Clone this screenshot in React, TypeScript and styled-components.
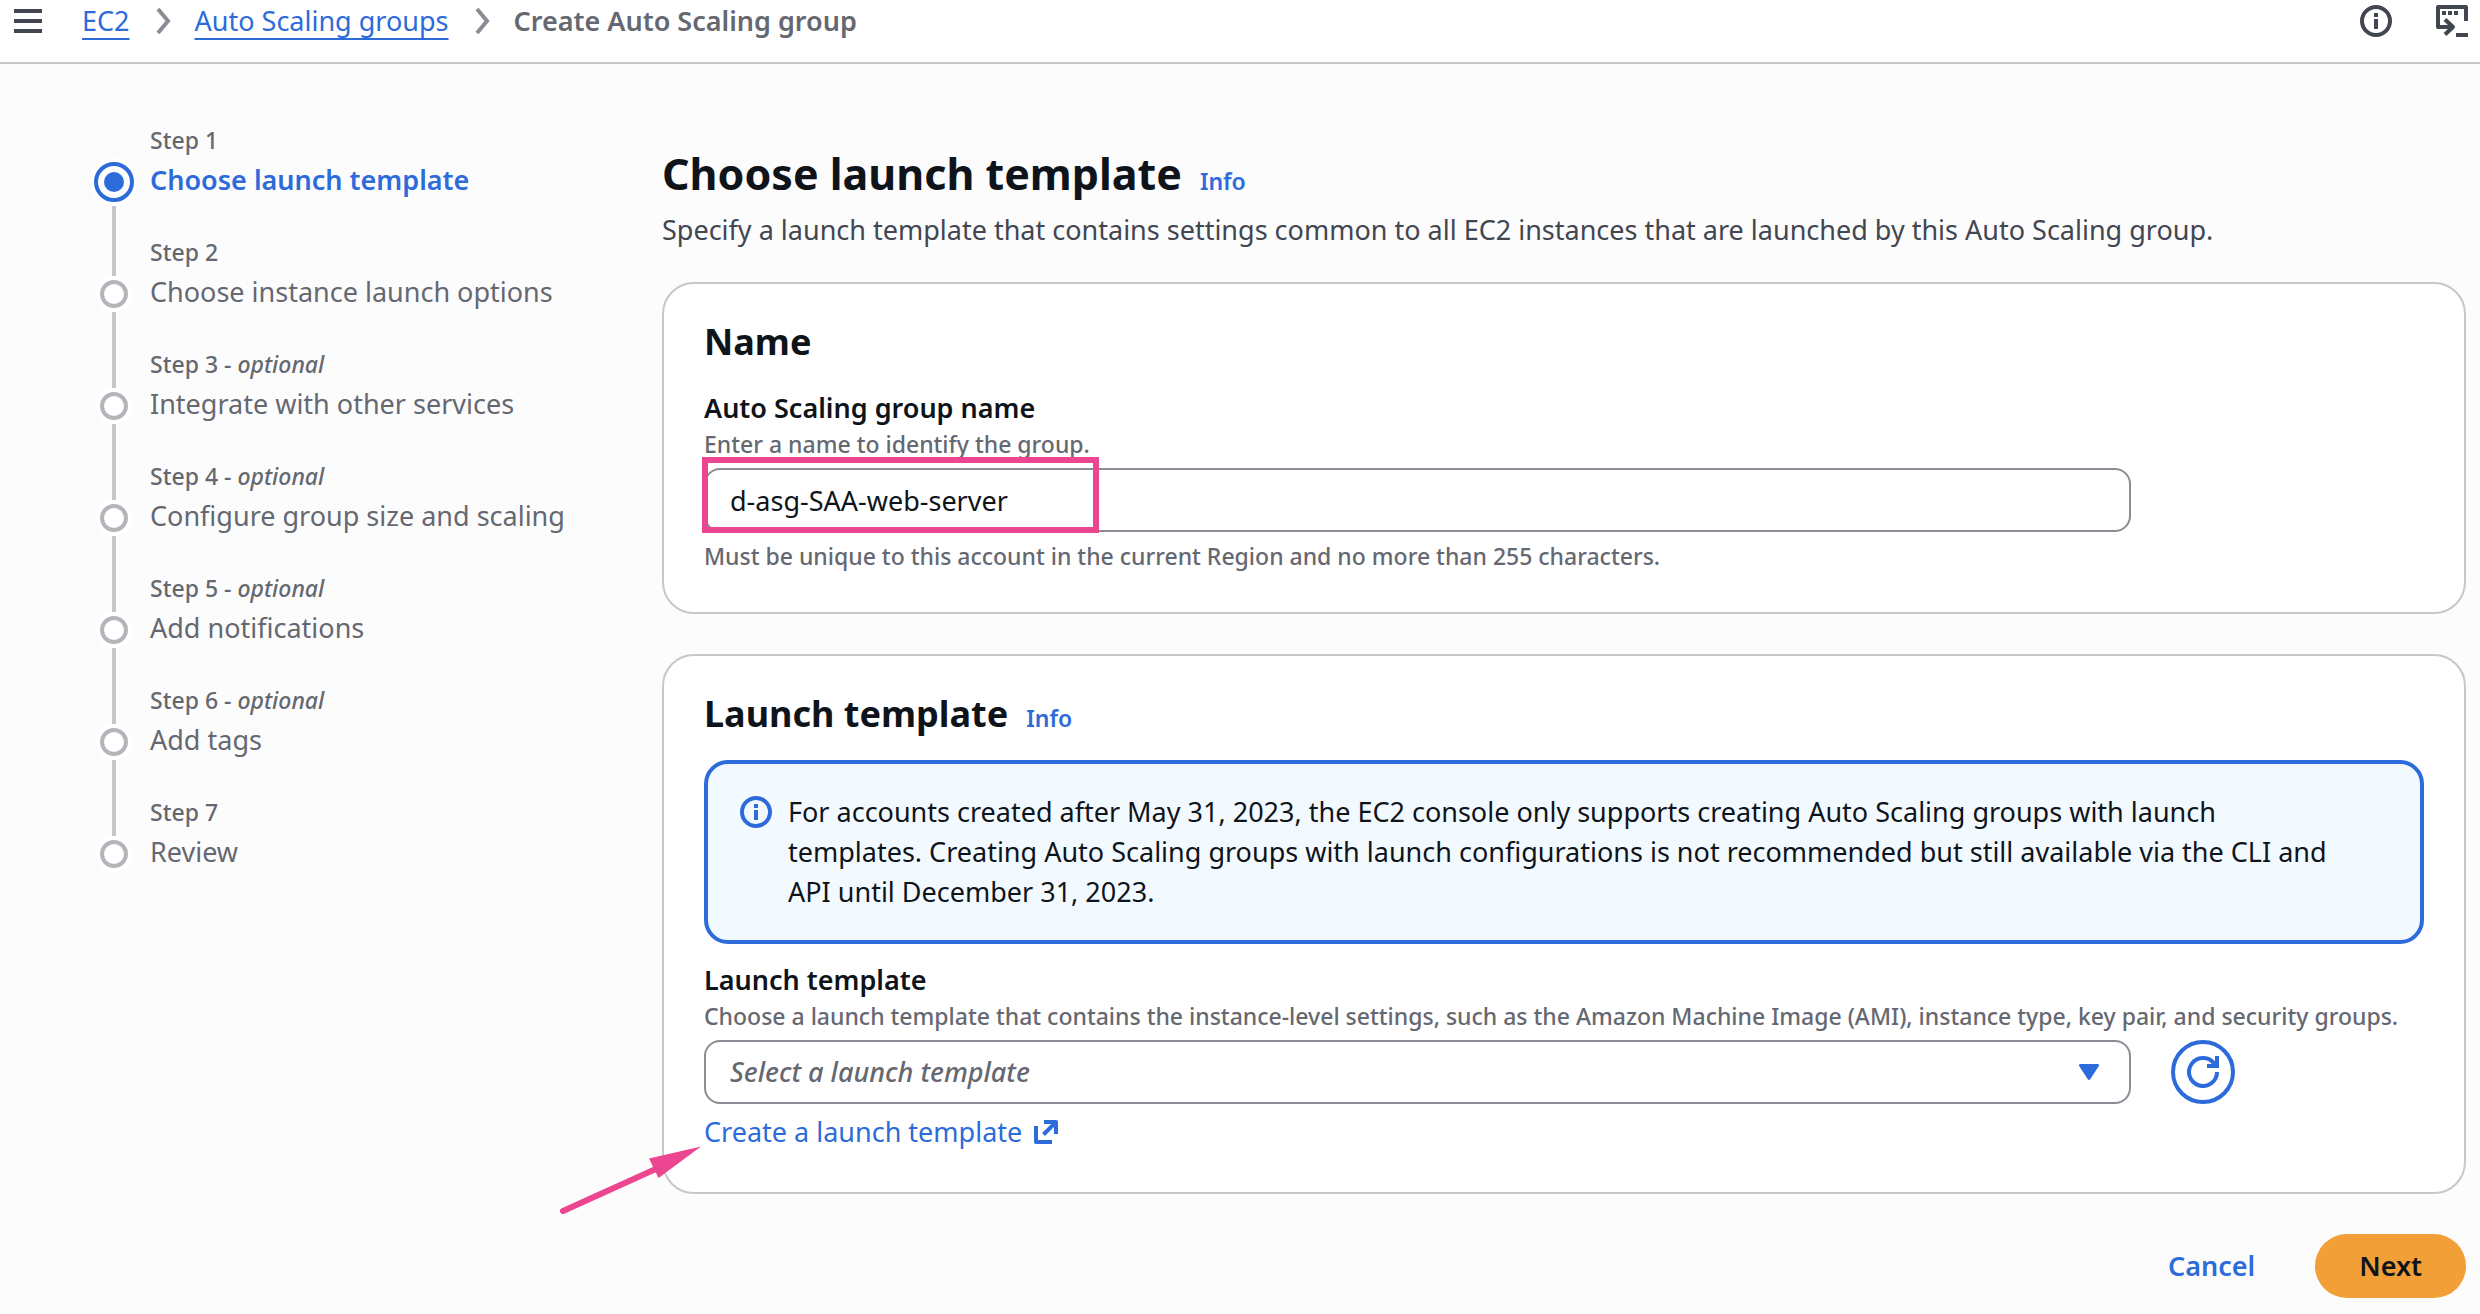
import React, { useState } from "react";
import styled, { createGlobalStyle, css } from "styled-components";

const color = {
  page: "#fcfcfd",
  surface: "#ffffff",
  line: "#c6c6cd",
  marker: "#b4b4bb",
  field: "#8c8c94",
  text: "#0f141a",
  body: "#424650",
  muted: "#656871",
  link: "#2d6bdb",
  notice: "#f3faff",
  primary: "#f29f38",
  accent: "#ec4690",
};

const GlobalStyle = createGlobalStyle`
  *, *::before, *::after { box-sizing: border-box; }
  body {
    margin: 0;
    background: ${color.page};
    color: ${color.text};
    font-family: "Noto Sans", "Open Sans", sans-serif;
    font-size: 27px;
    line-height: 40px;
  }
  h1, h2, p, ol { margin: 0; padding: 0; }
  button, input, select { font: inherit; color: inherit; }
  svg { display: block; flex: none; }
`;

const TopBar = styled.header`
  display: flex;
  justify-content: space-between;
  align-items: flex-start;
  padding: 0 12px 20px 14px;
  background: ${color.surface};
  border-bottom: 2px solid ${color.line};
`;

const IconButton = styled.button`
  display: flex;
  align-items: center;
  height: 42px;
  padding: 0;
  border: 0;
  background: none;
  color: ${color.body};
  cursor: pointer;
`;

const BarGroup = styled.div<{ $gap: number }>`
  display: flex;
  align-items: center;
  gap: ${(p) => p.$gap}px;
`;

const Crumbs = styled.ol`
  display: flex;
  list-style: none;
`;

const Crumb = styled.li`
  display: flex;
  align-items: center;
  font-weight: 600;
  color: ${color.muted};

  svg {
    margin: 0 24px 0 26px;
    color: ${color.field};
  }
`;

const CrumbLink = styled.a`
  color: ${color.link};
  font-weight: 400;
  text-decoration: underline 2px;
  text-underline-offset: 7px;
`;

const Layout = styled.div`
  display: grid;
  grid-template-columns: 528px minmax(0, 1fr);
  column-gap: 40px;
  padding: 60px 14px 16px 94px;
`;

const Steps = styled.ol`
  list-style: none;
`;

const Step = styled.li`
  display: flex;
  gap: 16px;
  min-height: 112px;
`;

const Rail = styled.div`
  display: flex;
  flex-direction: column;
  align-items: center;
  width: 40px;
`;

const RailLine = styled.span<{ $height?: number; $hidden?: boolean }>`
  width: 4px;
  ${(p) => (p.$height ? `height: ${p.$height}px;` : "flex: 1;")}
  background: ${(p) => (p.$hidden ? "transparent" : color.line)};
`;

const Dot = styled.span<{ $active: boolean }>`
  width: 28px;
  height: 28px;
  margin: 4px 0;
  border: 4px solid ${color.marker};
  border-radius: 50%;
  background: ${color.surface};
  box-shadow: 0 0 0 4px ${color.surface};
  ${(p) =>
    p.$active &&
    css`
      width: 40px;
      height: 40px;
      padding: 6px;
      border-color: ${color.link};
      background-color: ${color.link};
      background-clip: content-box;
    `}
`;

const StepText = styled.div`
  display: flex;
  flex-direction: column;
  gap: 4px;
  padding-bottom: 36px;
  color: ${color.muted};
`;

const StepNumber = styled.span`
  font-size: 23px;
  font-weight: 500;
  line-height: 32px;
`;

const StepName = styled.span<{ $active: boolean }>`
  ${(p) =>
    p.$active &&
    css`
      color: ${color.link};
      font-weight: 600;
    `}
`;

const Main = styled.main`
  display: flex;
  flex-direction: column;
  gap: 40px;
  padding-top: 20px;
`;

const Intro = styled.div`
  display: flex;
  flex-direction: column;
  gap: 6px;
  margin-bottom: -8px;
  color: ${color.body};
`;

const HeadingRow = styled.div`
  display: flex;
  align-items: baseline;
  gap: 18px;
`;

const PageTitle = styled.h1`
  color: ${color.text};
  font-size: 43px;
  font-weight: 700;
  line-height: 60px;
`;

const CardTitle = styled.h2`
  font-size: 36px;
  font-weight: 700;
  line-height: 48px;
`;

const InfoLink = styled.a`
  color: ${color.link};
  font-size: 23px;
  font-weight: 600;
  line-height: 32px;
  text-decoration: none;
`;

const Card = styled.section`
  display: flex;
  flex-direction: column;
  padding: 34px 40px 40px;
  border: 2px solid ${color.line};
  border-radius: 32px;
  background: ${color.surface};
`;

const Field = styled.div<{ $space: number }>`
  display: flex;
  flex-direction: column;
  margin-top: ${(p) => p.$space}px;
`;

const FieldLabel = styled.label`
  font-weight: 600;
`;

const Hint = styled.p`
  color: ${color.muted};
  font-size: 23px;
  font-weight: 500;
  line-height: 32px;
`;

const ControlRow = styled.div`
  display: grid;
  grid-template-columns: repeat(12, minmax(0, 1fr));
  column-gap: 40px;
  margin: 8px 0;
`;

const Control = styled.div`
  position: relative;
  grid-column: span 10;
`;

const controlBox = css`
  display: block;
  width: 100%;
  height: 64px;
  padding: 0 24px;
  border: 2px solid ${color.field};
  border-radius: 16px;
  background: ${color.surface};
`;

const TextInput = styled.input`
  ${controlBox}
`;

const Select = styled.select`
  ${controlBox}
  appearance: none;
  color: ${color.muted};
  font-style: italic;
  font-weight: 500;
`;

const Caret = styled.svg`
  position: absolute;
  top: 24px;
  right: 32px;
  color: ${color.link};
  pointer-events: none;
`;

const Highlight = styled.span`
  position: absolute;
  top: -11px;
  left: -2px;
  width: 397px;
  height: 76px;
  border: 6px solid ${color.accent};
  pointer-events: none;
`;

const RoundButton = styled.button`
  display: grid;
  place-items: center;
  width: 64px;
  height: 64px;
  padding: 0;
  border: 4px solid ${color.link};
  border-radius: 50%;
  background: ${color.surface};
  color: ${color.link};
  cursor: pointer;
`;

const Notice = styled.div`
  display: flex;
  align-items: flex-start;
  gap: 16px;
  margin-top: 22px;
  padding: 28px 72px 28px 32px;
  border: 4px solid ${color.link};
  border-radius: 24px;
  background: ${color.notice};

  svg {
    margin-top: 4px;
    color: ${color.link};
  }
`;

const CreateLink = styled.a`
  position: relative;
  display: flex;
  align-items: center;
  align-self: flex-start;
  gap: 12px;
  color: ${color.link};
  text-decoration: none;
`;

const Pointer = styled.svg`
  position: absolute;
  top: 30px;
  left: -150px;
  overflow: visible;
  pointer-events: none;
`;

const Actions = styled.div`
  display: flex;
  justify-content: flex-end;
  gap: 20px;
`;

const Button = styled.button<{ $primary?: boolean }>`
  height: 64px;
  padding: 0 ${(p) => (p.$primary ? 44 : 40)}px;
  border: 0;
  border-radius: 32px;
  background: ${(p) => (p.$primary ? color.primary : "transparent")};
  color: ${(p) => (p.$primary ? color.text : color.link)};
  font-weight: 600;
  cursor: pointer;
`;

const MenuIcon = () => (
  <svg width="28" height="24" viewBox="0 0 28 24" fill="currentColor" aria-hidden="true">
    <path d="M0 0h28v4H0zM0 10h28v4H0zM0 20h28v4H0z" />
  </svg>
);

const ChevronIcon = () => (
  <svg width="15" height="26" viewBox="0 0 15 26" fill="none" stroke="currentColor" strokeWidth="4" aria-hidden="true">
    <path d="M2 1l10 12L2 25" />
  </svg>
);

const InfoIcon = () => (
  <svg width="32" height="32" viewBox="0 0 32 32" fill="none" stroke="currentColor" strokeWidth="4" aria-hidden="true">
    <circle cx="16" cy="16" r="14" />
    <path d="M16 8v4M16 14v10" />
  </svg>
);

const ShellIcon = () => (
  <svg width="32" height="32" viewBox="0 0 32 32" fill="none" stroke="currentColor" strokeWidth="4" aria-hidden="true">
    <path d="M30 16V2H2v20h15" strokeLinejoin="round" />
    <path d="M9 14.500l8 7.500-8 7.500" strokeLinejoin="round" />
    <path d="M6 8h4M12 8h4M18 8h4M20 30h12" />
  </svg>
);

const RefreshIcon = () => (
  <svg width="32" height="32" viewBox="0 0 32 32" fill="none" stroke="currentColor" strokeWidth="4" aria-hidden="true">
    <path d="M30 16A14 14 0 1 1 27.500 8" />
    <path d="M30 0v10H20" />
  </svg>
);

const ExternalIcon = () => (
  <svg width="24" height="24" viewBox="0 0 24 24" fill="none" stroke="currentColor" strokeWidth="4" aria-hidden="true">
    <path d="M2 6v16h16M10 2h12v12M22 2L9.500 14.500" strokeLinejoin="round" />
  </svg>
);

const steps = [
  { name: "Choose launch template", optional: false },
  { name: "Choose instance launch options", optional: false },
  { name: "Integrate with other services", optional: true },
  { name: "Configure group size and scaling", optional: true },
  { name: "Add notifications", optional: true },
  { name: "Add tags", optional: true },
  { name: "Review", optional: false },
];

export default function App() {
  const [name, setName] = useState("d-asg-SAA-web-server");
  const current = 0;

  return (
    <>
      <GlobalStyle />
      <TopBar>
        <BarGroup $gap={40}>
          <IconButton aria-label="Open navigation">
            <MenuIcon />
          </IconButton>
          <nav aria-label="Breadcrumbs">
            <Crumbs>
              <Crumb>
                <CrumbLink href="#ec2">EC2</CrumbLink>
                <ChevronIcon />
              </Crumb>
              <Crumb>
                <CrumbLink href="#groups">Auto Scaling groups</CrumbLink>
                <ChevronIcon />
              </Crumb>
              <Crumb aria-current="page">Create Auto Scaling group</Crumb>
            </Crumbs>
          </nav>
        </BarGroup>
        <BarGroup $gap={44}>
          <IconButton aria-label="Help panel">
            <InfoIcon />
          </IconButton>
          <IconButton aria-label="CloudShell">
            <ShellIcon />
          </IconButton>
        </BarGroup>
      </TopBar>

      <Layout>
        <nav aria-label="Steps">
          <Steps>
            {steps.map((step, i) => {
              const active = i === current;
              return (
                <Step key={step.name} aria-current={active ? "step" : undefined}>
                  <Rail>
                    <RailLine $height={active ? 34 : 40} $hidden={i === 0} />
                    <Dot $active={active} />
                    <RailLine $hidden={i === steps.length - 1} />
                  </Rail>
                  <StepText>
                    <StepNumber>
                      Step {i + 1}
                      {step.optional && (
                        <>
                          {" - "}
                          <em>optional</em>
                        </>
                      )}
                    </StepNumber>
                    <StepName $active={active}>{step.name}</StepName>
                  </StepText>
                </Step>
              );
            })}
          </Steps>
        </nav>

        <Main>
          <Intro>
            <HeadingRow>
              <PageTitle>Choose launch template</PageTitle>
              <InfoLink href="#info">Info</InfoLink>
            </HeadingRow>
            <p>
              Specify a launch template that contains settings common to all EC2 instances that are launched by this
              Auto Scaling group.
            </p>
          </Intro>

          <Card>
            <CardTitle>Name</CardTitle>
            <Field $space={22}>
              <FieldLabel htmlFor="group-name">Auto Scaling group name</FieldLabel>
              <Hint>Enter a name to identify the group.</Hint>
              <ControlRow>
                <Control>
                  <TextInput id="group-name" value={name} onChange={(e) => setName(e.target.value)} />
                  <Highlight />
                </Control>
              </ControlRow>
              <Hint>Must be unique to this account in the current Region and no more than 255 characters.</Hint>
            </Field>
          </Card>

          <Card>
            <HeadingRow>
              <CardTitle>Launch template</CardTitle>
              <InfoLink href="#template-info">Info</InfoLink>
            </HeadingRow>
            <Notice>
              <InfoIcon />
              <p>
                For accounts created after May 31, 2023, the EC2 console only supports creating Auto Scaling groups
                with launch templates. Creating Auto Scaling groups with launch configurations is not recommended but
                still available via the CLI and API until December 31, 2023.
              </p>
            </Notice>
            <Field $space={16}>
              <FieldLabel htmlFor="launch-template">Launch template</FieldLabel>
              <Hint>
                Choose a launch template that contains the instance-level settings, such as the Amazon Machine Image
                (AMI), instance type, key pair, and security groups.
              </Hint>
              <ControlRow>
                <Control>
                  <Select id="launch-template" defaultValue="">
                    <option value="">Select a launch template</option>
                  </Select>
                  <Caret width="20" height="16" viewBox="0 0 20 16" fill="currentColor" aria-hidden="true">
                    <path d="M1.500 0h17c1.300 0 2 1.300 1.200 2.300l-8.500 13c-.6.900-1.800.900-2.400 0L.3 2.300C-.5 1.300.2 0 1.500 0z" />
                  </Caret>
                </Control>
                <RoundButton aria-label="Refresh launch templates">
                  <RefreshIcon />
                </RoundButton>
              </ControlRow>
              <CreateLink href="#create">
                Create a launch template
                <ExternalIcon />
                <Pointer width="150" height="80" viewBox="0 0 150 80" aria-hidden="true">
                  <path d="M9 69L104 26" stroke={color.accent} strokeWidth="6" strokeLinecap="round" />
                  <path d="M147 4.500L95 16.500l9.500 19.500z" fill={color.accent} />
                </Pointer>
              </CreateLink>
            </Field>
          </Card>

          <Actions>
            <Button type="button">Cancel</Button>
            <Button type="button" $primary>
              Next
            </Button>
          </Actions>
        </Main>
      </Layout>
    </>
  );
}
